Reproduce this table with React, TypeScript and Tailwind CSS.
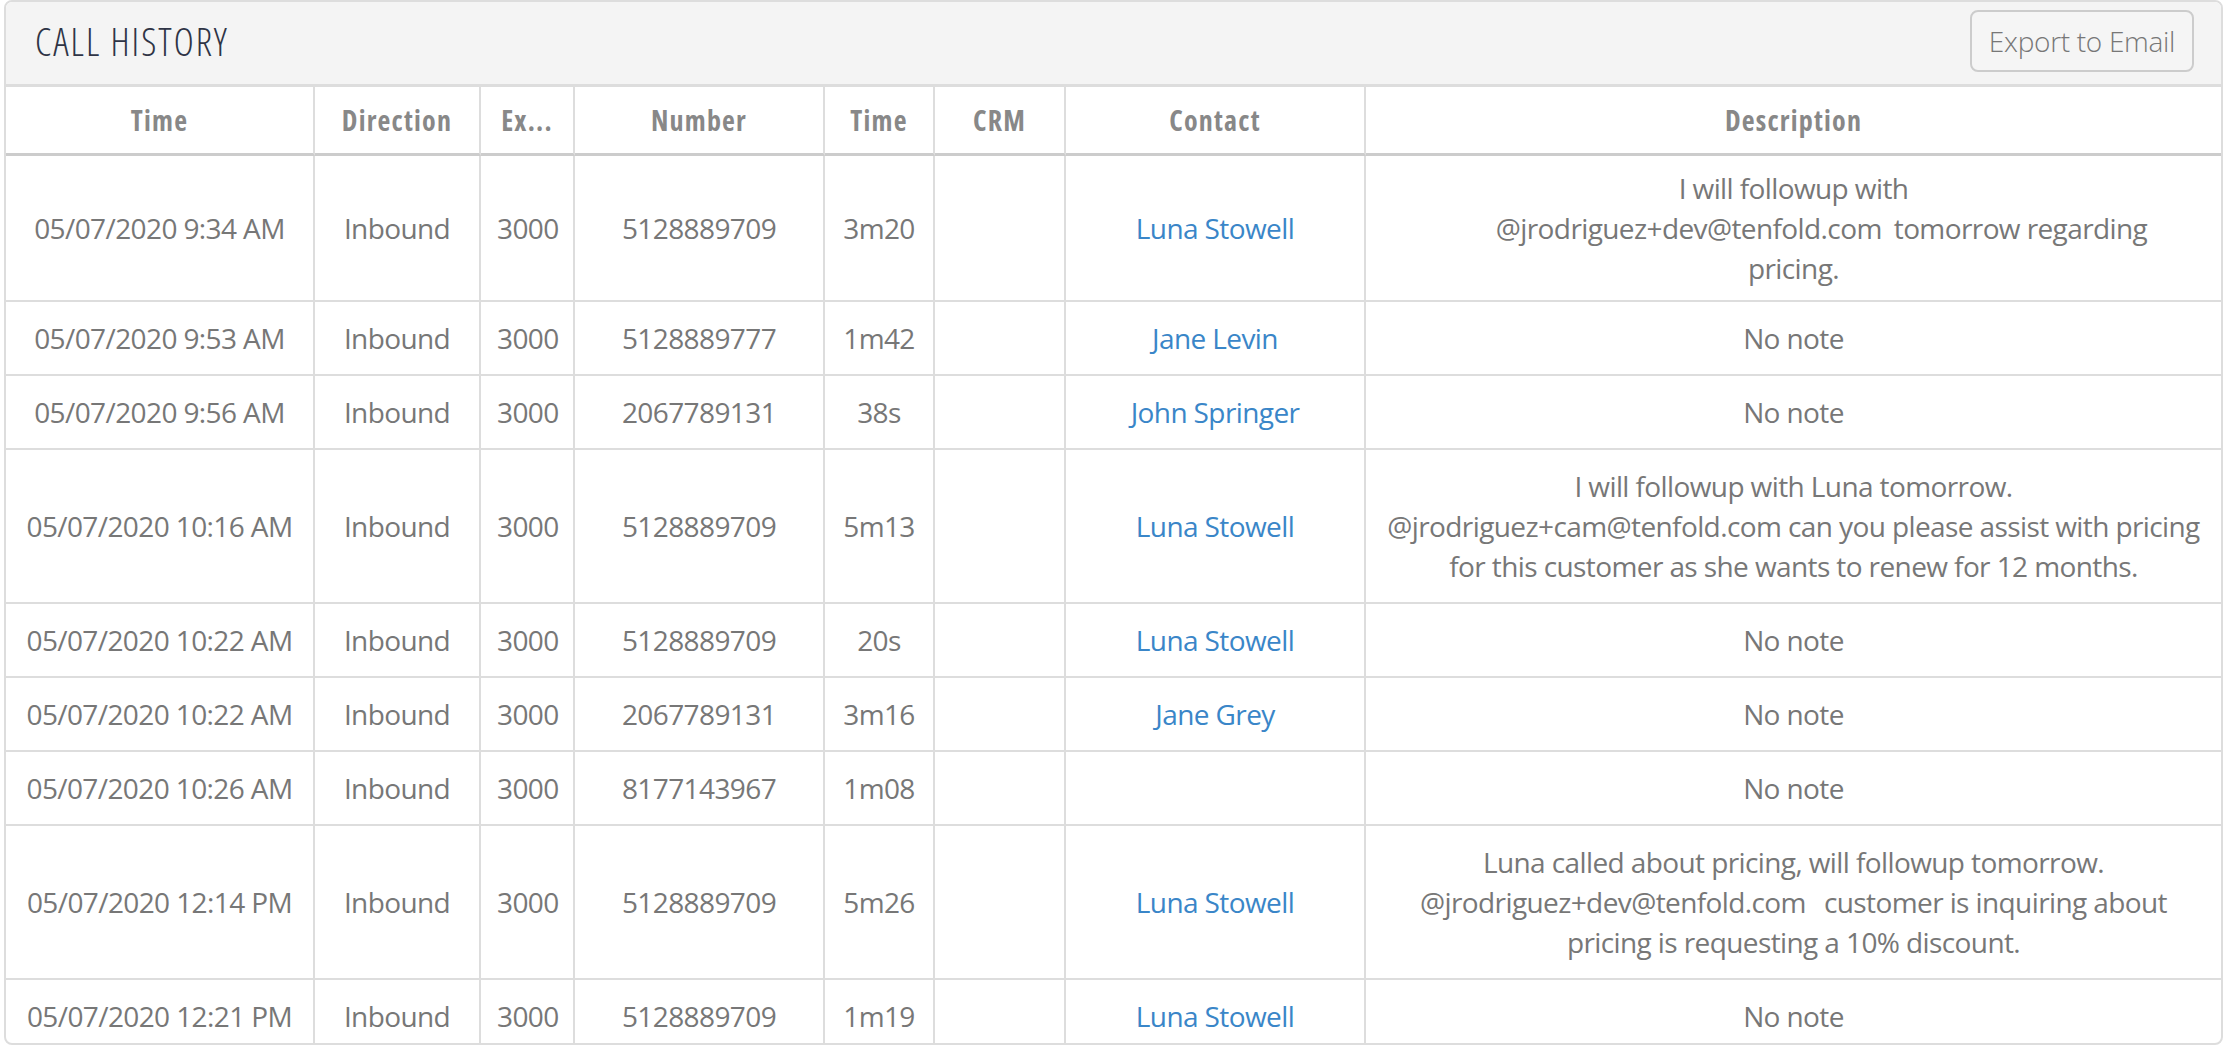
import React from "react";

type Call = {
  time: string;
  number: string;
  dur: string;
  contact?: string;
  note: React.ReactNode[];
};

const Mention = ({ email, gap }: { email: string; gap: string }) => (
  <span className={gap}>{email}</span>
);

const calls: Call[] = [
  {
    time: "05/07/2020 9:34 AM",
    number: "5128889709",
    dur: "3m20",
    contact: "Luna Stowell",
    note: [
      "I will followup with",
      <>
        <Mention email="@jrodriguez+dev@tenfold.com" gap="ml-[56px] mr-[12px]" />
        tomorrow regarding
      </>,
      "pricing.",
    ],
  },
  { time: "05/07/2020 9:53 AM", number: "5128889777", dur: "1m42", contact: "Jane Levin", note: ["No note"] },
  { time: "05/07/2020 9:56 AM", number: "2067789131", dur: "38s", contact: "John Springer", note: ["No note"] },
  {
    time: "05/07/2020 10:16 AM",
    number: "5128889709",
    dur: "5m13",
    contact: "Luna Stowell",
    note: [
      "I will followup with Luna tomorrow.",
      "@jrodriguez+cam@tenfold.com can you please assist with pricing",
      "for this customer as she wants to renew for 12 months.",
    ],
  },
  { time: "05/07/2020 10:22 AM", number: "5128889709", dur: "20s", contact: "Luna Stowell", note: ["No note"] },
  { time: "05/07/2020 10:22 AM", number: "2067789131", dur: "3m16", contact: "Jane Grey", note: ["No note"] },
  { time: "05/07/2020 10:26 AM", number: "8177143967", dur: "1m08", note: ["No note"] },
  {
    time: "05/07/2020 12:14 PM",
    number: "5128889709",
    dur: "5m26",
    contact: "Luna Stowell",
    note: [
      "Luna called about pricing, will followup tomorrow.",
      <>
        <Mention email="@jrodriguez+dev@tenfold.com" gap="mr-[18px]" />
        customer is inquiring about
      </>,
      "pricing is requesting a 10% discount.",
    ],
  },
  { time: "05/07/2020 12:21 PM", number: "5128889709", dur: "1m19", contact: "Luna Stowell", note: ["No note"] },
];

const headers = ["Time", "Direction", "Ex...", "Number", "Time", "CRM", "Contact", "Description"];
const widths = ["w-[309px]", "w-[166px]", "w-[94px]", "w-[250px]", "w-[110px]", "w-[131px]", "w-[300px]", ""];

const font = { fontFamily: '"Open Sans", "Noto Sans", sans-serif' };

export default function App() {
  return (
    <div className="min-h-screen bg-white pl-[4px] pr-[7px]" style={font}>
      <div className="h-[1045px] overflow-hidden rounded-[8px] border-2 border-[#dddddd] bg-white">
        {/* panel heading */}
        <div className="flex h-[85px] items-center justify-between border-b-[3px] border-[#dddddd] bg-[#f4f4f4] pl-[29px] pr-[27px]">
          <h2 className="mt-[-5px] text-[38px] leading-none font-light tracking-[2px] text-[#2f3446] [font-stretch:75%]">
            CALL HISTORY
          </h2>
          <button className="mt-[-4px] h-[62px] w-[224px] rounded-[8px] border-2 border-[#cccccc] bg-[#f5f5f5] text-[28px] font-light tracking-[-0.3px] text-[#777777]">
            Export to Email
          </button>
        </div>

        <table className="w-full table-fixed border-separate border-spacing-0 text-center text-[28px] leading-[40px] text-[#777777]">
          <colgroup>
            {widths.map((w, i) => (
              <col key={i} className={w} />
            ))}
          </colgroup>
          <thead>
            <tr>
              {headers.map((h, i) => (
                <th
                  key={i}
                  className={`border-b-[3px] border-[#cccccc] py-[13px] font-bold tracking-[1.2px] text-[#888888] [font-stretch:75%] ${
                    i < headers.length - 1 ? "border-r-2 border-r-[#dddddd]" : ""
                  }`}
                >
                  {h}
                </th>
              ))}
            </tr>
          </thead>
          <tbody className="tracking-[-0.6px]">
            {calls.map((c, r) => {
              const cells: React.ReactNode[] = [
                c.time,
                "Inbound",
                "3000",
                c.number,
                c.dur,
                "",
                c.contact ? <a className="text-[#3a86c8]">{c.contact}</a> : "",
                c.note.map((line, k) => (
                  <span key={k} className="block whitespace-nowrap">
                    {line}
                  </span>
                )),
              ];
              return (
                <tr key={r}>
                  {cells.map((cell, i) => (
                    <td
                      key={i}
                      className={`border-b-2 border-[#dddddd] px-[16px] align-middle whitespace-nowrap ${
                        r === 0 ? "py-[12px]" : "py-[16px]"
                      } ${i < cells.length - 1 ? "border-r-2" : ""}`}
                    >
                      {cell}
                    </td>
                  ))}
                </tr>
              );
            })}
          </tbody>
        </table>
      </div>
    </div>
  );
}
